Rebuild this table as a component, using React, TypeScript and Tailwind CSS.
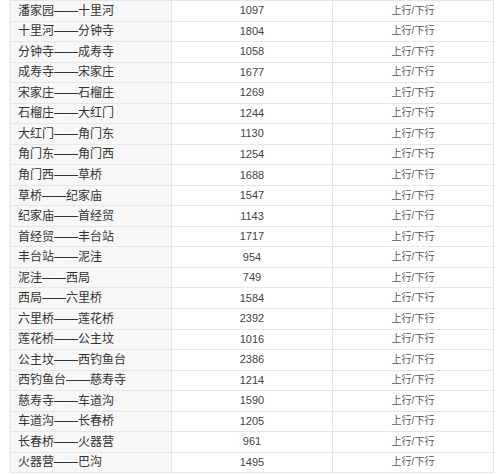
import React from 'react';

interface iRow {
  name: string;
  dist: number;
}

const rows: iRow[] = [
  { name: '潘家园——十里河', dist: 1097 },
  { name: '十里河——分钟寺', dist: 1804 },
  { name: '分钟寺——成寿寺', dist: 1058 },
  { name: '成寿寺——宋家庄', dist: 1677 },
  { name: '宋家庄——石榴庄', dist: 1269 },
  { name: '石榴庄——大红门', dist: 1244 },
  { name: '大红门——角门东', dist: 1130 },
  { name: '角门东——角门西', dist: 1254 },
  { name: '角门西——草桥', dist: 1688 },
  { name: '草桥——纪家庙', dist: 1547 },
  { name: '纪家庙——首经贸', dist: 1143 },
  { name: '首经贸——丰台站', dist: 1717 },
  { name: '丰台站——泥洼', dist: 954 },
  { name: '泥洼——西局', dist: 749 },
  { name: '西局——六里桥', dist: 1584 },
  { name: '六里桥——莲花桥', dist: 2392 },
  { name: '莲花桥——公主坟', dist: 1016 },
  { name: '公主坟——西钓鱼台', dist: 2386 },
  { name: '西钓鱼台——慈寿寺', dist: 1214 },
  { name: '慈寿寺——车道沟', dist: 1590 },
  { name: '车道沟——长春桥', dist: 1205 },
  { name: '长春桥——火器营', dist: 961 },
  { name: '火器营——巴沟', dist: 1495 },
];

export default function App() {
  return (
    <div className="w-[500px] h-[474px] bg-white overflow-hidden pl-[10px] font-['Liberation_Sans','Noto_Sans_CJK_SC',sans-serif]">
      <table className="w-[483px] border-collapse table-fixed text-[12px] text-[#333]">
        <tbody>
          {rows.map((row) => (
            <tr key={row.name} className="h-[20.54px]">
              <td className="w-[161px] border border-[#e6e6e6] bg-[#f7f7f7] pl-[7px] p-0 leading-none">
                {row.name}
              </td>
              <td className="w-[161px] border border-[#e6e6e6] text-center p-0 leading-none text-[11px] text-[#444]">
                {row.dist}
              </td>
              <td className="w-[161px] border border-[#e6e6e6] text-center p-0 leading-none text-[10px] text-[#555]">
                上行/下行
              </td>
            </tr>
          ))}
        </tbody>
      </table>
    </div>
  );
}
